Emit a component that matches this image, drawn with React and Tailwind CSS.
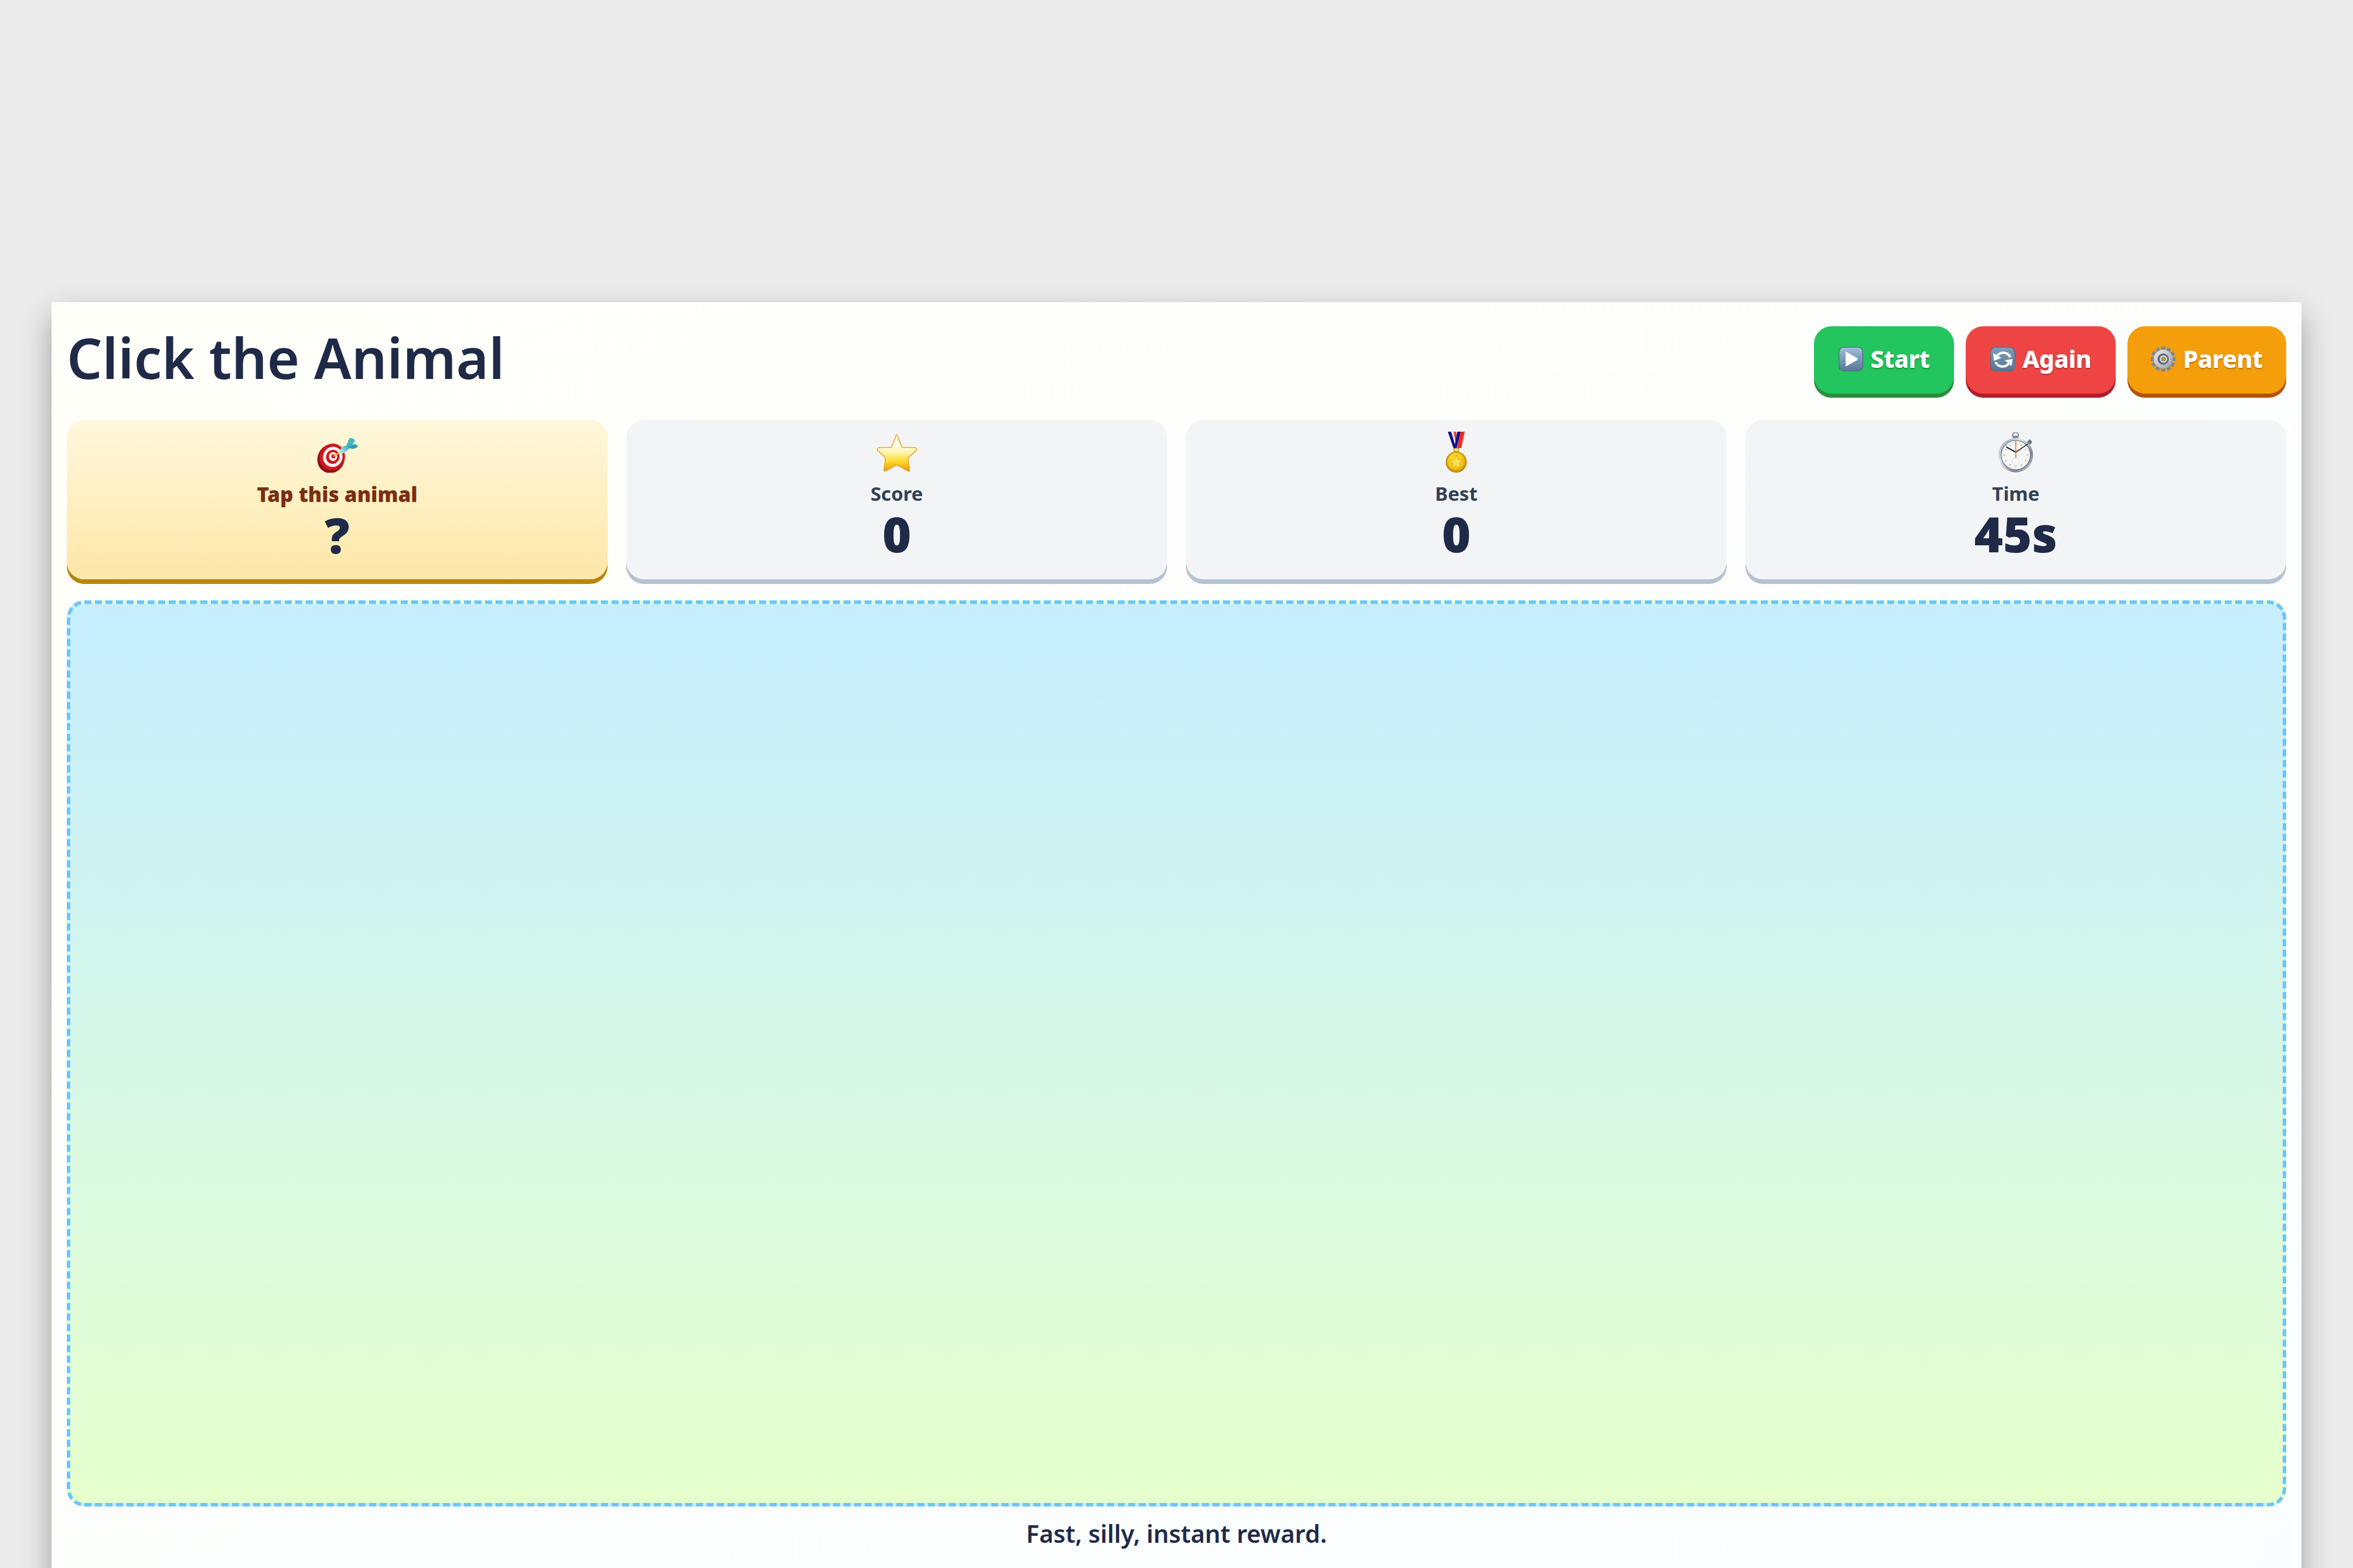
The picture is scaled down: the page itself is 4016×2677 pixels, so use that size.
const FONT = "font-['Noto_Sans','Open_Sans',sans-serif]";

function Defs() {
  return (
    <svg width="0" height="0" className="absolute">
      <defs>
        <linearGradient id="tile" x1="0" y1="0" x2="0" y2="1">
          <stop offset="0" stopColor="#a3bfdb" />
          <stop offset="0.45" stopColor="#7d9cbc" />
          <stop offset="1" stopColor="#5b7795" />
        </linearGradient>
        <linearGradient id="tile2" x1="0" y1="0" x2="0" y2="1">
          <stop offset="0" stopColor="#7f9fc0" />
          <stop offset="1" stopColor="#587593" />
        </linearGradient>
        <linearGradient id="star" x1="0" y1="0" x2="0" y2="1">
          <stop offset="0.28" stopColor="#fffdf0" />
          <stop offset="0.5" stopColor="#fff4a8" />
          <stop offset="0.72" stopColor="#ffdc2e" />
          <stop offset="1" stopColor="#e39a0c" />
        </linearGradient>
        <radialGradient id="gold" cx="0.45" cy="0.4" r="0.65">
          <stop offset="0" stopColor="#ffe84d" />
          <stop offset="0.7" stopColor="#f1c40f" />
          <stop offset="1" stopColor="#c98a10" />
        </radialGradient>
        <linearGradient id="steel" x1="0" y1="0" x2="1" y2="1">
          <stop offset="0" stopColor="#e6eaef" />
          <stop offset="1" stopColor="#9ba4af" />
        </linearGradient>
        <linearGradient id="rim" x1="0" y1="0" x2="1" y2="1">
          <stop offset="0" stopColor="#8b97a5" />
          <stop offset="0.35" stopColor="#dbe6f0" />
          <stop offset="0.7" stopColor="#7f8a96" />
          <stop offset="1" stopColor="#c6d2dd" />
        </linearGradient>
        <linearGradient id="dart" x1="0" y1="1" x2="1" y2="0">
          <stop offset="0" stopColor="#c8f2f6" />
          <stop offset="1" stopColor="#3aa9bc" />
        </linearGradient>
      </defs>
    </svg>
  );
}

function Target() {
  return (
    <svg width="70" height="60" viewBox="0 0 70 60" className="block">
      <ellipse cx="24" cy="36" rx="23" ry="25" transform="rotate(25 24 36)" fill="#8f0f14" />
      <ellipse cx="26" cy="33" rx="21.5" ry="23" transform="rotate(25 26 33)" fill="#d4171e" />
      <ellipse cx="27" cy="33" rx="16.5" ry="17.5" transform="rotate(25 27 33)" fill="#f5f5f5" />
      <ellipse cx="27" cy="33" rx="11.5" ry="12" transform="rotate(25 27 33)" fill="#d4171e" />
      <ellipse cx="27.5" cy="32.5" rx="7" ry="7.5" fill="#f5f5f5" />
      <ellipse cx="28" cy="32" rx="3.5" ry="3.5" fill="#cf161d" />
      <path d="M28 32 L41 24" stroke="#e7b51e" strokeWidth="2.5" />
      <path d="M37 25 Q40 17 48 14 L55 14 L55 19 Q49 26 41 28 Z" fill="url(#dart)" />
      <path d="M50 14 L55.5 1 Q61 0 65 5 L58 16 Z" fill="#43b6c8" />
      <path d="M52 16 L64 11 Q69 12 70 15 Q66 20 58 19 Z" fill="#2f9eb2" />
    </svg>
  );
}

function Star() {
  return (
    <svg width="70" height="66" viewBox="-1 -1 72 68" className="block">
      <path
        d="M34.5 0 Q35.5 0 36.5 4 L43 21 Q43.5 22.5 45 22.5 L67 23 Q71 24 69 28 L55 40 Q54 41 54.5 43 L57 62 Q57 66 54 64 L36 54 Q35 53.5 33 54 L15 64 Q12 66 12 62 L14.5 43 Q15 41 14 40 L1 28 Q-1 24 3 23 L24 22.5 Q25.5 22.5 26 21 L32.5 4 Q33.5 0 34.5 0 Z"
        fill="url(#star)"
        stroke="#eda322"
        strokeWidth="1.6"
        strokeLinejoin="round"
      />
    </svg>
  );
}

function Medal() {
  return (
    <svg width="37" height="70" viewBox="0 0 37 70" className="block">
      <path d="M25 0 L33 0 L27 28 L20 28 Z" fill="#ee2d24" />
      <path d="M4 0 L10 0 L19 28 L14 29 Z" fill="#14148a" />
      <path d="M10 0 L22 0 L21 22 L18 28 Z" fill="#f2f2f2" />
      <path d="M14 0 L18 0 L19 16 L17 16 Z" fill="#ee2d24" />
      <path d="M20 0 L26 0 L19 29 L15 28 Z" fill="#14148a" />
      <rect x="14" y="28" width="9" height="8" rx="1" fill="#d8a615" />
      <rect x="16" y="29" width="5" height="4" fill="#e8e8e8" />
      <ellipse cx="18.5" cy="52" rx="18" ry="18" fill="#c68a12" />
      <ellipse cx="18.5" cy="51.5" rx="15.5" ry="16" fill="url(#gold)" />
      <path
        d="M18.5 40 L22 48 L30 49 L24 54 L26 62 L18.5 58 L11 62 L13 54 L7 49 L15 48 Z"
        fill="#f9df53"
        stroke="#c9960f"
        strokeWidth="0.7"
      />
    </svg>
  );
}

function Stopwatch() {
  const ticks = Array.from({ length: 12 }, (_, i) => i * 30);
  return (
    <svg width="60" height="69" viewBox="0 0 60 69" className="block">
      <circle cx="29" cy="5.5" r="5" fill="none" stroke="#8b939b" strokeWidth="2.2" />
      <rect x="25" y="6" width="8" height="5" rx="1" fill="#7a838c" />
      <rect x="50" y="13" width="7" height="7" rx="1.5" transform="rotate(40 53 16)" fill="#6e7a86" />
      <circle cx="29.5" cy="39" r="29.5" fill="url(#rim)" />
      <circle cx="29.5" cy="39" r="25" fill="#f7f7f5" stroke="#5d6670" strokeWidth="1.2" />
      {ticks.map((a) => (
        <rect key={a} x="28.5" y="18" width="2" height="3" fill="#b5b8bc" transform={`rotate(${a} 29.5 39)`} />
      ))}
      <circle cx="29.5" cy="50" r="6" fill="none" stroke="#dcdde0" strokeWidth="1" />
      <path d="M29.5 34 L13 25" stroke="#26292d" strokeWidth="2" />
      <path d="M29.5 34 L50 20" stroke="#26292d" strokeWidth="1.6" />
      <path d="M29.5 14 L29.5 44" stroke="#e0703a" strokeWidth="1.6" />
    </svg>
  );
}

function Play() {
  return (
    <svg width="42" height="42" viewBox="0 0 42 42" className="block">
      <rect x="0.75" y="0.75" width="40.5" height="40.5" rx="8" fill="url(#tile)" stroke="#56708c" strokeWidth="1.5" />
      <path d="M12 9.5 Q12 8 13.5 9 L32 19.5 Q33.5 21 32 22.5 L13.5 33 Q12 34 12 32.5 Z" fill="#fff" />
    </svg>
  );
}

function Cycle() {
  return (
    <svg width="42" height="42" viewBox="0 0 42 42" className="block">
      <rect x="0.75" y="0.75" width="40.5" height="40.5" rx="8" fill="url(#tile2)" stroke="#52708d" strokeWidth="1.5" />
      <path d="M34 18 A13 13 0 0 0 12 15" fill="none" stroke="#fff" strokeWidth="4" />
      <path d="M9 26 A13 13 0 0 0 31 29" fill="none" stroke="#fff" strokeWidth="4" />
      <path d="M5 11 L19 19 L6 24 Z" fill="#fff" />
      <path d="M38 21 L24.5 23 L36 33 Z" fill="#fff" />
    </svg>
  );
}

function Gear() {
  const teeth = Array.from({ length: 12 }, (_, i) => i * 30);
  return (
    <svg width="42" height="44" viewBox="0 0 42 44" className="block">
      {teeth.map((a) => (
        <rect key={a} x="17.5" y="0.5" width="7" height="9" rx="1" fill="#7f8893" transform={`rotate(${a} 21 22)`} />
      ))}
      <circle cx="21" cy="22" r="16" fill="url(#steel)" />
      <circle cx="21" cy="22" r="9.5" fill="#5d6570" />
      <circle cx="21.5" cy="22" r="6.5" fill="#d5d8dc" />
      <circle cx="21.5" cy="22" r="3" fill="#f59e0b" stroke="#5d6570" strokeWidth="1.2" />
    </svg>
  );
}

function GameButton({ icon, label, face }) {
  return (
    <button className={`flex h-[115px] items-center justify-center gap-[13px] rounded-[30px] pb-[4px] ${face} text-[41px] leading-none font-extrabold tracking-[-0.5px] text-white [text-shadow:0_2px_3px_rgba(0,0,0,0.25)]`}>
      {icon}
      <span>{label}</span>
    </button>
  );
}

function Stat({ icon, label, value, tone }) {
  return (
    <div className={`flex h-[272px] flex-col items-center rounded-[30px] ${tone}`}>
      <div className="mt-[20px] flex h-[70px] items-end">{icon}</div>
      <div className="mt-[14px] text-[33px] leading-[44px] font-bold text-[#334155]">{label}</div>
      <div className="mt-[2px] text-[84px] leading-[88px] font-black text-[#1e2a47]">{value}</div>
    </div>
  );
}

export default function App() {
  return (
    <div className={`h-[2677px] overflow-hidden bg-[#ebebeb] px-[88px] pt-[516px] ${FONT}`}>
      <Defs />
      <main className="h-[2200px] bg-gradient-to-br from-[#fffffa] to-[#fafdff] px-[26px] shadow-[0_24px_48px_rgba(0,0,0,0.32)]">
        <header className="flex h-[201px] items-start justify-between">
          <h1 className="mt-[39px] text-[95px] leading-[110px] font-semibold text-[#1e2a47]">Click the Animal</h1>
          <div className="mt-[41px] flex gap-[20px]">
            <GameButton icon={<Play />} label="Start" face="w-[239px] bg-[#22c55e] shadow-[0_7px_0_#2e8b3c]" />
            <GameButton icon={<Cycle />} label="Again" face="w-[256px] bg-[#ef4444] shadow-[0_7px_0_#b01f2b]" />
            <GameButton icon={<Gear />} label="Parent" face="w-[271px] bg-[#f59e0b] shadow-[0_7px_0_#b45309]" />
          </div>
        </header>
        <section className="grid grid-cols-4 gap-[32px]">
          <div className="flex h-[272px] flex-col items-center rounded-[30px] bg-gradient-to-b from-[#fff8dc] to-[#fde7a8] shadow-[0_8px_0_#b7860b]">
            <div className="mt-[28px] flex h-[62px] items-end"><Target /></div>
            <div className="mt-[14px] text-[35px] leading-[46px] font-black text-[#7c2d12]">Tap this animal</div>
            <div className="mt-[2px] text-[84px] leading-[88px] font-black text-[#1e2a47]">?</div>
          </div>
          <Stat icon={<Star />} label="Score" value="0" tone="bg-[#f3f4f6] shadow-[0_8px_0_#b4c3d1]" />
          <Stat icon={<Medal />} label="Best" value="0" tone="bg-[#f3f4f6] shadow-[0_8px_0_#b4c3d1]" />
          <Stat icon={<Stopwatch />} label="Time" value="45s" tone="bg-[#f3f4f6] shadow-[0_8px_0_#b4c3d1]" />
        </section>
        <section className="mt-[36px] h-[1547px] rounded-[30px] border-[6px] border-dashed border-[#6bc5ff] bg-gradient-to-b from-[#c6eeff] to-[#e6ffcc]" />
        <p className="mt-[22px] text-center text-[41.5px] leading-[48px] font-semibold text-[#1e2a47]">Fast, silly, instant reward.</p>
      </main>
    </div>
  );
}
